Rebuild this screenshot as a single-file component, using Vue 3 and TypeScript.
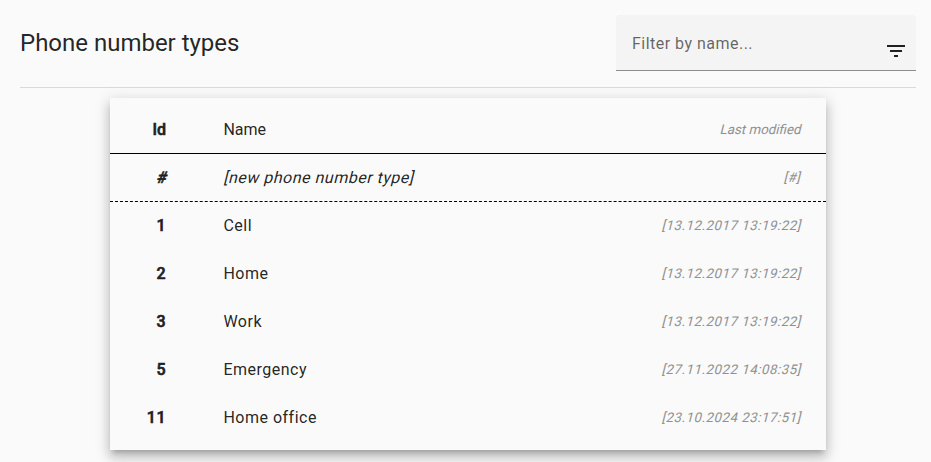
<script setup lang="ts">
interface PhoneNumberType {
  id: number
  name: string
  modified: string
}

const types: PhoneNumberType[] = [
  { id: 1, name: 'Cell', modified: '13.12.2017 13:19:22' },
  { id: 2, name: 'Home', modified: '13.12.2017 13:19:22' },
  { id: 3, name: 'Work', modified: '13.12.2017 13:19:22' },
  { id: 5, name: 'Emergency', modified: '27.11.2022 14:08:35' },
  { id: 11, name: 'Home office', modified: '23.10.2024 23:17:51' },
]
</script>

<template>
  <main class="page">
    <header class="toolbar">
      <h1 class="title">Phone number types</h1>
      <div class="filter">
        <span class="label">Filter by name...</span>
        <svg class="icon" viewBox="0 0 24 24"><path d="M10 18h4v-2h-4v2zM3 6v2h18V6H3zm3 7h12v-2H6v2z" /></svg>
      </div>
    </header>
    <section class="card">
      <div class="row head">
        <span class="id">Id</span>
        <span class="name">Name</span>
        <span class="modified slant">Last modified</span>
      </div>
      <div class="row new">
        <span class="id slant">#</span>
        <span class="name"><span class="slant">[new phone number type]</span></span>
        <span class="modified slant">[#]</span>
      </div>
      <div v-for="t in types" :key="t.id" class="row">
        <span class="id">{{ t.id }}</span>
        <span class="name">{{ t.name }}</span>
        <span class="modified slant">[{{ t.modified }}]</span>
      </div>
    </section>
  </main>
</template>

<style>
html,
body {
  background: #fafafa;
  overflow: hidden;
}
</style>

<style scoped>
.page {
  box-sizing: border-box;
  height: 462px;
  padding: 15px 15px 0 20px;
  font-family: Roboto, sans-serif;
  color: rgba(0, 0, 0, 0.87);
}
.toolbar {
  display: flex;
  align-items: center;
  justify-content: space-between;
  padding-bottom: 16px;
  border-bottom: 1px solid #dadada;
}
.title {
  margin: 0;
  font-size: 24px;
  line-height: 32px;
  font-weight: 400;
  letter-spacing: -0.01px;
}
.filter {
  box-sizing: border-box;
  display: flex;
  justify-content: space-between;
  width: 300px;
  height: 56px;
  padding: 0 8px 0 16px;
  border-radius: 4px 4px 0 0;
  background: linear-gradient(#8c8c8c, #8c8c8c) bottom / 100% 1px no-repeat #f4f4f4;
}
.label {
  font-size: 16px;
  line-height: 57px;
  letter-spacing: 0.48px;
  color: rgba(0, 0, 0, 0.6);
}
.icon {
  width: 24px;
  height: 24px;
  margin-top: 24px;
  fill: rgba(0, 0, 0, 0.87);
}
.card {
  box-sizing: border-box;
  width: 716px;
  height: 352px;
  margin: 10px 0 0 90px;
  padding-top: 8px;
  box-shadow: 0 5px 5px -3px rgba(0, 0, 0, 0.2), 0 8px 10px 1px rgba(0, 0, 0, 0.14), 0 3px 14px 2px rgba(0, 0, 0, 0.12);
  background: #fafafa;
}
.row {
  box-sizing: border-box;
  display: flex;
  height: 48px;
  padding-right: 25px;
  font-size: 16px;
  line-height: 48px;
  letter-spacing: 0.5px;
}
.head {
  border-bottom: 1px solid #000;
  letter-spacing: 0;
}
.new {
  border-bottom: 1px dashed #000;
}
.id {
  width: 56px;
  text-align: right;
  font-weight: 500;
  color: #212121;
  -webkit-text-stroke: 0.6px #212121;
}
.name {
  flex: 1;
  padding-left: 57.4px;
}
.modified {
  margin-right: 1px;
  font-size: 13.333px;
  color: #909090;
}
.slant {
  display: inline-block;
  height: 48px;
  transform: skewX(-14deg);
  transform-origin: 0 30px;
}
</style>
